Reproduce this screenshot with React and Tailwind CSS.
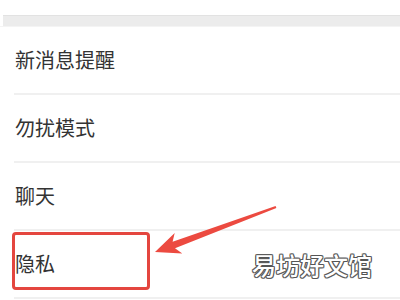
const rows = ["新消息提醒", "勿扰模式", "聊天", "隐私"]

const App = () => {
	return (
		<div className="relative w-[400px] h-[300px] overflow-hidden bg-white font-['Noto_Sans_CJK_SC',sans-serif] text-[#333]">
			<div className="h-[15px] bg-white" />
			<div className="h-[11px] ml-[3px] bg-[#ececec] border-t border-[#e2e2e2]" />
			<div className="h-[1px] bg-[#f4f4f4]" />
			{rows.map((label) => (
				<div key={label} className="flex flex-col">
					<div className="h-[66px] flex items-center pl-[15px] text-[20px] leading-none">
						{label}
					</div>
					<div className="h-[2px] ml-[14px] bg-[#f0f0f0]" />
				</div>
			))}

			{/* highlight box */}
			<div className="absolute left-[12px] top-[232px] w-[138px] h-[58px] border-[3px] border-[#e4463f] rounded-[4px]" />

			{/* arrow */}
			<svg className="absolute inset-0" width="400" height="300" viewBox="0 0 400 300">
				<polygon
					points="155,252 174.7,233 172.6,241.7 275.6,205.9 276.4,208.1 175,248.3 182.3,253.6"
					fill="#ec4a40"
				/>
			</svg>

			{/* watermark */}
			<div className="absolute left-[252px] top-[253px] text-[24px] leading-none font-medium text-white [text-shadow:1px_0_#555,-1px_0_#555,0_1px_#555,0_-1px_#555,1px_1px_#777,-1px_-1px_#777,1px_-1px_#777,-1px_1px_#777]">
				易坊好文馆
			</div>
		</div>
	)
}

export default App
